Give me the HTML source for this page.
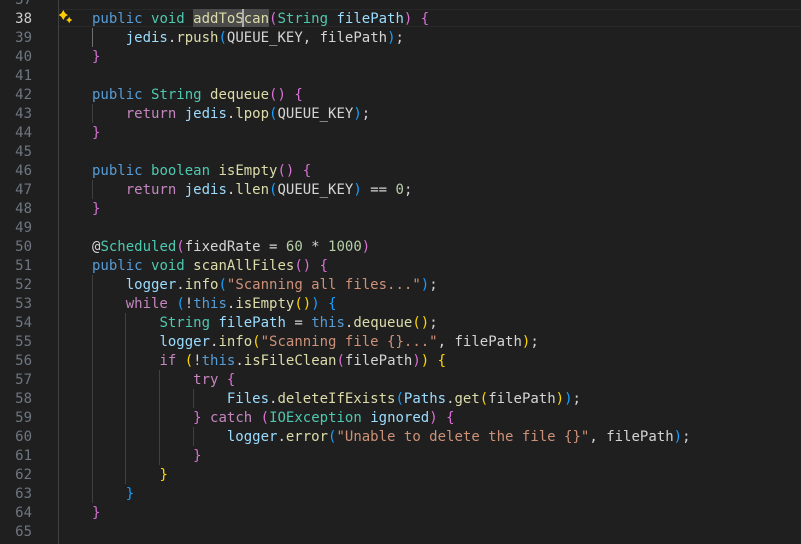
<!DOCTYPE html>
<html><head><meta charset="utf-8"><style>
html,body{margin:0;padding:0;background:#1f1f1f;width:801px;height:544px;overflow:hidden}
#e{position:relative;width:801px;height:544px;overflow:hidden;font:14px/19px "DejaVu Sans Mono",monospace;color:#d4d4d4;font-variant-ligatures:none}
#t{position:absolute;left:0;top:1px;width:801px;height:544px}
.l{position:absolute;left:92px;white-space:pre;height:19px}
.n{position:absolute;left:0;width:32px;text-align:right;color:#6e7681;height:19px}
.g{position:absolute;width:1px;background:#404040}
i{font-style:normal}
.k{color:#569cd6}.t{color:#4ec9b0}.f{color:#dcdcaa}.v{color:#9cdcfe}.s{color:#ce9178}.c{color:#c586c0}.m{color:#b5cea8}
.y{color:#ffd700}.p{color:#da70d6}.b{color:#179fff}
</style></head><body><div id="e">
<div style="position:absolute;left:59px;top:9px;width:742px;height:16px;border-top:1px solid #282828;border-bottom:1px solid #282828"></div>
<div style="position:absolute;left:193px;top:9px;width:76px;height:18px;background:#4b4b4b"></div>
<div class="g" style="left:58px;top:0;height:544px"></div>
<div class="g" style="left:92px;top:28px;height:19px;background:#707070"></div>
<div class="g" style="left:92px;top:104px;height:19px"></div>
<div class="g" style="left:92px;top:180px;height:19px"></div>
<div class="g" style="left:92px;top:275px;height:228px"></div>
<div class="g" style="left:125px;top:313px;height:171px"></div>
<div class="g" style="left:159px;top:370px;height:95px"></div>
<div class="g" style="left:193px;top:389px;height:19px"></div>
<div class="g" style="left:193px;top:427px;height:19px"></div>
<svg style="position:absolute;left:56px;top:6px" width="24" height="24" viewBox="0 0 24 24"><path fill="#ffcc00" d="M7.300 4L9.200 7.200 11.800 9 9.200 10.800 7.300 14 5.400 10.800 2.800 9 5.400 7.200zM13.200 10.800L14.300 12.900 16.300 14 14.300 15.100 13.200 17.200 12.100 15.100 10.100 14 12.100 12.900z"/></svg>
<div id="t">
<div class="n" style="top:-10px">37</div>
<div class="n" style="top:9px;color:#ccc">38</div>
<div class="n" style="top:28px">39</div>
<div class="n" style="top:47px">40</div>
<div class="n" style="top:66px">41</div>
<div class="n" style="top:85px">42</div>
<div class="n" style="top:104px">43</div>
<div class="n" style="top:123px">44</div>
<div class="n" style="top:142px">45</div>
<div class="n" style="top:161px">46</div>
<div class="n" style="top:180px">47</div>
<div class="n" style="top:199px">48</div>
<div class="n" style="top:218px">49</div>
<div class="n" style="top:237px">50</div>
<div class="n" style="top:256px">51</div>
<div class="n" style="top:275px">52</div>
<div class="n" style="top:294px">53</div>
<div class="n" style="top:313px">54</div>
<div class="n" style="top:332px">55</div>
<div class="n" style="top:351px">56</div>
<div class="n" style="top:370px">57</div>
<div class="n" style="top:389px">58</div>
<div class="n" style="top:408px">59</div>
<div class="n" style="top:427px">60</div>
<div class="n" style="top:446px">61</div>
<div class="n" style="top:465px">62</div>
<div class="n" style="top:484px">63</div>
<div class="n" style="top:503px">64</div>
<div class="n" style="top:522px">65</div>
<div class="l" style="top:9px"><i class="k">public</i> <i class="t">void</i> <i class="f">addToScan</i><i class="p">(</i><i class="t">String</i> <i class="v">filePath</i><i class="p">)</i> <i class="p">{</i></div>
<div class="l" style="top:28px">    <i class="v">jedis</i>.<i class="f">rpush</i><i class="b">(</i>QUEUE_KEY, filePath<i class="b">)</i>;</div>
<div class="l" style="top:47px"><i class="p">}</i></div>
<div class="l" style="top:85px"><i class="k">public</i> <i class="t">String</i> <i class="f">dequeue</i><i class="p">()</i> <i class="p">{</i></div>
<div class="l" style="top:104px">    <i class="c">return</i> <i class="v">jedis</i>.<i class="f">lpop</i><i class="b">(</i>QUEUE_KEY<i class="b">)</i>;</div>
<div class="l" style="top:123px"><i class="p">}</i></div>
<div class="l" style="top:161px"><i class="k">public</i> <i class="t">boolean</i> <i class="f">isEmpty</i><i class="p">()</i> <i class="p">{</i></div>
<div class="l" style="top:180px">    <i class="c">return</i> <i class="v">jedis</i>.<i class="f">llen</i><i class="b">(</i>QUEUE_KEY<i class="b">)</i> == <i class="m">0</i>;</div>
<div class="l" style="top:199px"><i class="p">}</i></div>
<div class="l" style="top:237px">@<i class="t">Scheduled</i><i class="p">(</i>fixedRate = <i class="m">60</i> * <i class="m">1000</i><i class="p">)</i></div>
<div class="l" style="top:256px"><i class="k">public</i> <i class="t">void</i> <i class="f">scanAllFiles</i><i class="p">()</i> <i class="p">{</i></div>
<div class="l" style="top:275px">    <i class="v">logger</i>.<i class="f">info</i><i class="b">(</i><i class="s">"Scanning all files..."</i><i class="b">)</i>;</div>
<div class="l" style="top:294px">    <i class="c">while</i> <i class="b">(</i>!<i class="k">this</i>.<i class="f">isEmpty</i><i class="y">()</i><i class="b">)</i> <i class="b">{</i></div>
<div class="l" style="top:313px">        <i class="t">String</i> <i class="v">filePath</i> = <i class="k">this</i>.<i class="f">dequeue</i><i class="y">()</i>;</div>
<div class="l" style="top:332px">        <i class="v">logger</i>.<i class="f">info</i><i class="y">(</i><i class="s">"Scanning file {}..."</i>, filePath<i class="y">)</i>;</div>
<div class="l" style="top:351px">        <i class="c">if</i> <i class="y">(</i>!<i class="k">this</i>.<i class="f">isFileClean</i><i class="p">(</i>filePath<i class="p">)</i><i class="y">)</i> <i class="y">{</i></div>
<div class="l" style="top:370px">            <i class="c">try</i> <i class="p">{</i></div>
<div class="l" style="top:389px">                <i class="v">Files</i>.<i class="f">deleteIfExists</i><i class="b">(</i><i class="v">Paths</i>.<i class="f">get</i><i class="y">(</i>filePath<i class="y">)</i><i class="b">)</i>;</div>
<div class="l" style="top:408px">            <i class="p">}</i> <i class="c">catch</i> <i class="p">(</i><i class="t">IOException</i> <i class="v">ignored</i><i class="p">)</i> <i class="p">{</i></div>
<div class="l" style="top:427px">                <i class="v">logger</i>.<i class="f">error</i><i class="b">(</i><i class="s">"Unable to delete the file {}"</i>, filePath<i class="b">)</i>;</div>
<div class="l" style="top:446px">            <i class="p">}</i></div>
<div class="l" style="top:465px">        <i class="y">}</i></div>
<div class="l" style="top:484px">    <i class="b">}</i></div>
<div class="l" style="top:503px"><i class="p">}</i></div>
</div>
<div style="position:absolute;left:242px;top:9px;width:2px;height:18px;background:#aeafad"></div>
</div></body></html>
